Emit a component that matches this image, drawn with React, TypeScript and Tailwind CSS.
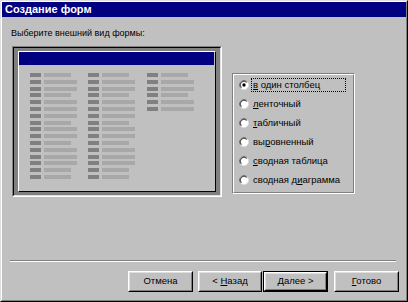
import React from "react";

const font = "font-['Liberation_Sans',Arial,sans-serif]";

// S = short field, L = long field
const colA = "SLLSLLLSLLSLLLSS".split("");
const colC = "SLLSLL".split("");

const FieldColumn = ({ rows, width }: { rows: string[]; width: string }) => (
  <div className={`flex flex-col ${width}`}>
    {rows.map((r, i) => (
      <div key={i} className="h-[6.8px] flex items-start">
        <div className="w-[11px] h-[4px] bg-[#808080]" />
        <div
          className={`ml-[3px] h-[4px] bg-[#a8a8a8] ${
            r === "S" ? "w-[27px]" : "w-[33px]"
          }`}
        />
      </div>
    ))}
  </div>
);

const Radio = ({ checked }: { checked?: boolean }) => (
  <svg width="10" height="10" viewBox="0 0 12 12" className="shrink-0">
    <circle cx="6" cy="6" r="5.5" fill="#ffffff" />
    <path d="M2.1 9.9 A5.5 5.5 0 0 1 9.9 2.1" fill="none" stroke="#808080" strokeWidth="1" />
    <path d="M2.8 9.2 A4.5 4.5 0 0 1 9.2 2.8" fill="none" stroke="#000000" strokeWidth="1" />
    <path d="M9.9 2.1 A5.5 5.5 0 0 1 2.1 9.9" fill="none" stroke="#dfdfdf" strokeWidth="1" />
    {checked && <circle cx="6" cy="6" r="2" fill="#000000" />}
  </svg>
);

const options: { pre: string; key: string; post: string }[] = [
  { pre: "", key: "в", post: " один столбец" },
  { pre: "", key: "л", post: "енточный" },
  { pre: "", key: "т", post: "абличный" },
  { pre: "вы", key: "р", post: "овненный" },
  { pre: "", key: "с", post: "водная таблица" },
  { pre: "сводная д", key: "и", post: "аграмма" },
];

const Button = ({
  children,
  width,
  isDefault,
}: {
  children: React.ReactNode;
  width: string;
  isDefault?: boolean;
}) => (
  <div className={`${width} h-[21px] ${isDefault ? "border border-black" : ""}`}>
    <div className="h-full border border-t-white border-l-white border-r-black border-b-black">
      <div className="h-full border border-t-[#dfdfdf] border-l-[#dfdfdf] border-r-[#808080] border-b-[#808080] flex items-center justify-center text-[9.5px] text-black">
        {children}
      </div>
    </div>
  </div>
);

export default function App() {
  return (
    <div
      className={`w-[408px] h-[302px] bg-[#c0c0c0] border border-t-[#dfdfdf] border-l-[#dfdfdf] border-r-black border-b-black ${font}`}
    >
      <div className="h-full border border-t-white border-l-white border-r-[#808080] border-b-[#808080] flex flex-col">
        <div className="h-[15px] bg-[#000080] text-white font-bold text-[11px] pl-[3px] flex items-center">
          Создание форм
        </div>

        <div className="flex flex-col">
          <div className="pl-[9px] pt-[10px] text-[9px] leading-[12px] text-black">
            Выберите внешний вид формы:
          </div>

          <div className="flex pl-[10px] mt-[7px]">
            {/* form preview */}
            <div className="w-[210px] h-[151px] border border-t-[#808080] border-l-[#808080] border-r-white border-b-white">
              <div className="h-full border border-t-black border-l-black border-r-[#dfdfdf] border-b-[#dfdfdf] bg-[#808080] pl-[4px] pr-[4px] pt-[3px] pb-[3px]">
                <div className="h-full bg-[#c0c0c0] border border-t-white border-l-white border-r-black border-b-black">
                  <div className="h-[13px] bg-[#000080] mr-px" />
                  <div className="flex pl-[11px] mt-[8px]">
                    <FieldColumn rows={colA} width="w-[58px]" />
                    <FieldColumn rows={colA} width="w-[59px]" />
                    <FieldColumn rows={colC} width="w-[50px]" />
                  </div>
                </div>
              </div>
            </div>

            {/* layout options */}
            <div className="ml-[10px] mt-[27px] w-[123px] h-[121px] border border-t-[#808080] border-l-[#808080] border-r-white border-b-white">
              <div className="h-full border border-t-white border-l-white border-r-[#808080] border-b-[#808080] flex flex-col">
                {options.map((o, i) => (
                  <div key={i} className="h-[19px] flex items-center pl-[5px]">
                    <Radio checked={i === 0} />
                    <div
                      className={`ml-[2px] w-[95px] h-[14px] pl-px flex items-center text-[9.5px] leading-[12px] text-black border border-dotted ${
                        i === 0 ? "border-black" : "border-transparent"
                      }`}
                    >
                      <span className="whitespace-pre">
                        {o.pre}
                        <u>{o.key}</u>
                        {o.post}
                      </span>
                    </div>
                  </div>
                ))}
              </div>
            </div>
          </div>

          <div className="ml-[8px] mt-[63px] w-[386px] h-[2px] border-t border-t-[#808080] border-b border-b-white" />

          <div className="flex pl-[126px] mt-[9px]">
            <Button width="w-[65px]">Отмена</Button>
            <div className="ml-[5px]">
              <Button width="w-[64px]">
                <span>
                  &lt; <u>Н</u>азад
                </span>
              </Button>
            </div>
            <div className="ml-px">
              <Button width="w-[65px]" isDefault>
                <span>
                  <u>Д</u>алее &gt;
                </span>
              </Button>
            </div>
            <div className="ml-[6px]">
              <Button width="w-[65px]">
                <span>
                  <u>Г</u>отово
                </span>
              </Button>
            </div>
          </div>
        </div>
      </div>
    </div>
  );
}
